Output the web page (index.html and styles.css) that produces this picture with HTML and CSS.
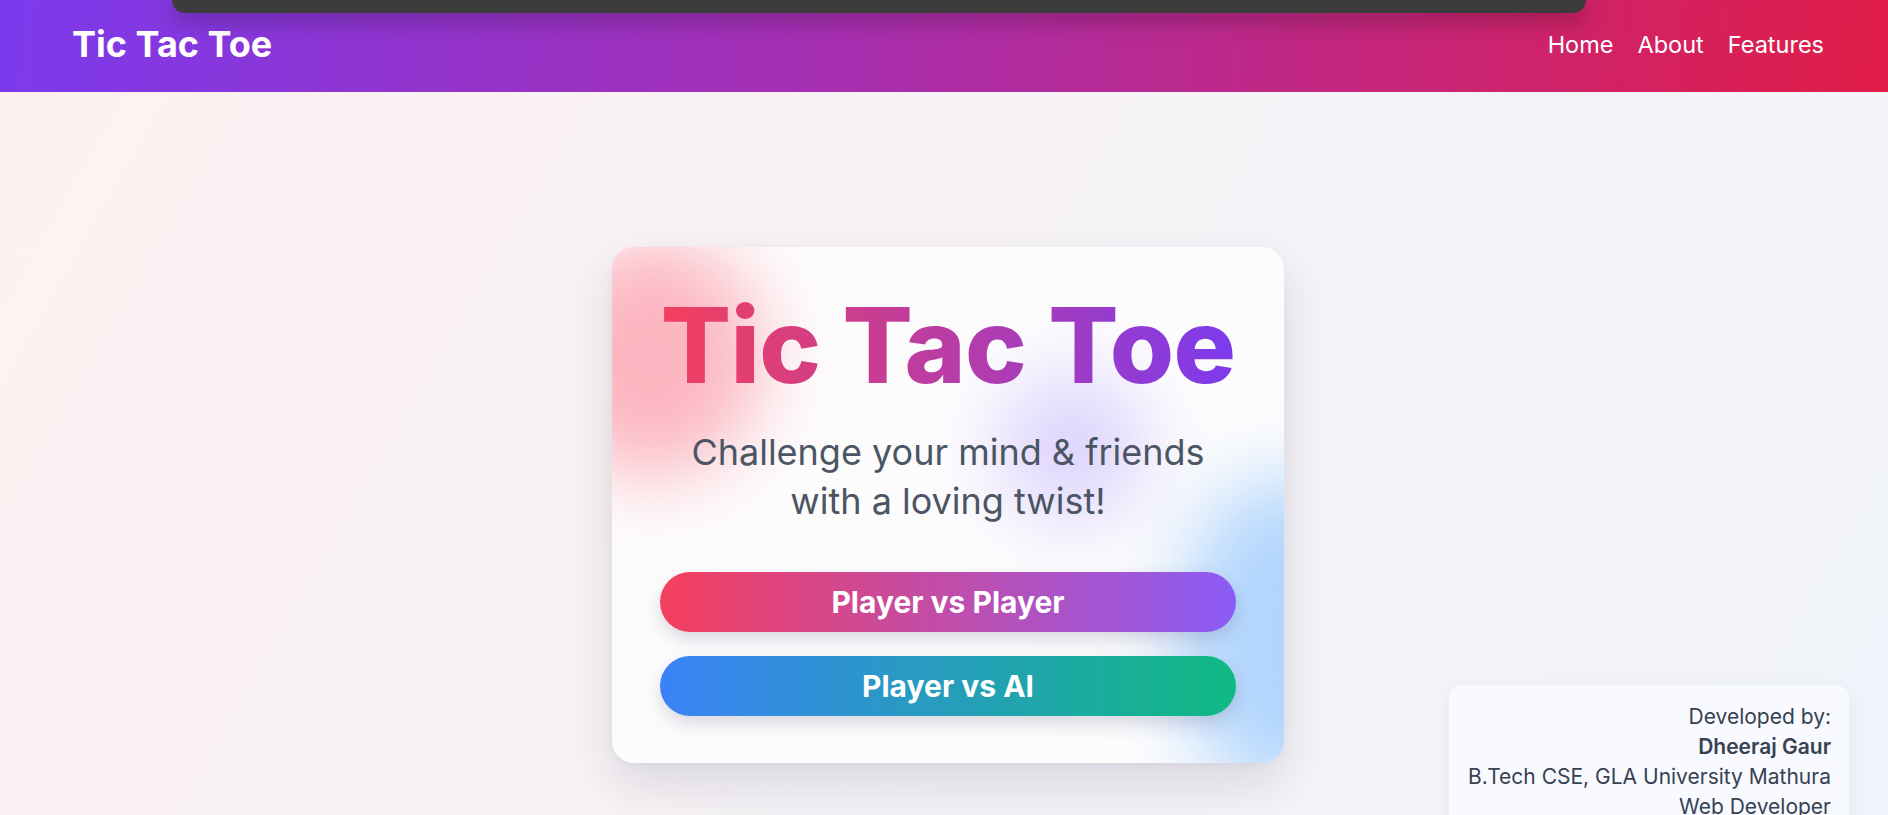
FILE: index.html
```html
<!DOCTYPE html>
<html lang="en">
<head>
<meta charset="utf-8">
<title>Tic Tac Toe</title>
<link rel="stylesheet" href="styles.css">
</head>
<body>
<div class="overlay-bar"></div>
<nav class="navbar">
  <div class="brand">Tic Tac Toe</div>
  <ul class="nav-links">
    <li><a href="#">Home</a></li>
    <li><a href="#">About</a></li>
    <li><a href="#">Features</a></li>
  </ul>
</nav>
<main class="main">
  <section class="card">
    <span class="blob blob-pink"></span>
    <span class="blob blob-purple"></span>
    <span class="blob blob-blue"></span>
    <h1 class="title">Tic Tac Toe</h1>
    <p class="subtitle">Challenge your mind &amp; friends<br>with a loving twist!</p>
    <div class="buttons">
      <button class="btn btn-pvp">Player vs Player</button>
      <button class="btn btn-ai">Player vs AI</button>
    </div>
  </section>
</main>
<footer class="credits">
  <div>Developed by:</div>
  <div class="name">Dheeraj Gaur</div>
  <div>B.Tech CSE, GLA University Mathura</div>
  <div>Web Developer</div>
</footer>
</body>
</html>
```
FILE: styles.css
```css
* { box-sizing: border-box; }
html, body { margin: 0; padding: 0; }
body {
  font-family: Inter, "Noto Sans", sans-serif;
  height: 815px;
  background: linear-gradient(120deg, #fff1f1 0%, #f7f3f6 45%, #f1f4fb 100%);
  position: relative;
  overflow: hidden;
}
.overlay-bar {
  position: absolute;
  left: 172px;
  top: 0;
  width: 1414px;
  height: 13px;
  background: #3c3c3c;
  border-radius: 0 0 14px 14px;
  box-shadow: 0 6px 22px rgba(0,0,0,0.35);
  z-index: 10;
}
.navbar {
  height: 92px;
  display: flex;
  align-items: center;
  justify-content: space-between;
  padding: 0 64px 0 72px;
  background: linear-gradient(95deg, #7c3aed 0%, #a82fb0 45%, #e11d48 100%);
  color: #fff;
}
.brand {
  font-size: 36px;
  font-weight: 700;
  margin-top: -4px;
}
.nav-links {
  list-style: none;
  display: flex;
  gap: 24px;
  margin: -4px 0 0;
  padding: 0;
}
.nav-links a {
  color: #fff;
  text-decoration: none;
  font-size: 23.5px;
}
.main {
  display: flex;
  justify-content: center;
  padding-top: 155px;
}
.card {
  position: relative;
  overflow: hidden;
  width: 672px;
  padding: 36px 48px 47px;
  border-radius: 22px;
  background: rgba(255,255,255,0.72);
  box-shadow: 0 22px 50px rgba(30,30,60,0.13), 0 2px 8px rgba(30,30,60,0.04);
  text-align: center;
  margin-left: 8px;
}
.blob {
  position: absolute;
  border-radius: 50%;
  filter: blur(38px);
  pointer-events: none;
}
.blob-pink {
  width: 220px; height: 240px;
  left: -70px; top: -10px;
  background: #fb7185;
  opacity: 0.5;
}
.blob-purple {
  width: 150px; height: 150px;
  left: 385px; top: 125px;
  background: #c4b5fd;
  opacity: 0.55;
}
.blob-blue {
  width: 220px; height: 320px;
  left: 565px; top: 230px;
  background: #93c5fd;
  opacity: 0.7;
}
.title {
  position: relative;
  margin: 0;
  font-size: 104px;
  font-weight: 800;
  line-height: 1.2;
  letter-spacing: -0.7px;
  background: linear-gradient(90deg, #f43f5e 0%, #7c3aed 100%);
  -webkit-background-clip: text;
  background-clip: text;
  color: transparent;
}
.subtitle {
  position: relative;
  margin: 20px 0 0;
  font-size: 36px;
  line-height: 49px;
  color: #4b5563;
}
.buttons {
  position: relative;
  display: flex;
  flex-direction: column;
  gap: 24px;
  margin-top: 46px;
}
.btn {
  height: 60px;
  border: none;
  border-radius: 30px;
  color: #fff;
  font-family: Inter, "Noto Sans", sans-serif;
  font-size: 30px;
  font-weight: 700;
  box-shadow: 0 8px 18px rgba(40,40,80,0.16);
  cursor: pointer;
}
.btn-pvp { background: linear-gradient(90deg, #f43f5e 0%, #8b5cf6 100%); }
.btn-ai { background: linear-gradient(90deg, #3b82f6 0%, #10b981 100%); }
.credits {
  position: absolute;
  top: 685px;
  right: 39px;
  width: 400px;
  padding: 17px 18px;
  text-align: right;
  white-space: nowrap;
  font-size: 21px;
  line-height: 30px;
  color: #374151;
  background: rgba(248,250,255,0.92);
  border-radius: 12px;
  box-shadow: 0 4px 20px rgba(30,40,80,0.06);
}
.credits .name { font-weight: 600; }
```
